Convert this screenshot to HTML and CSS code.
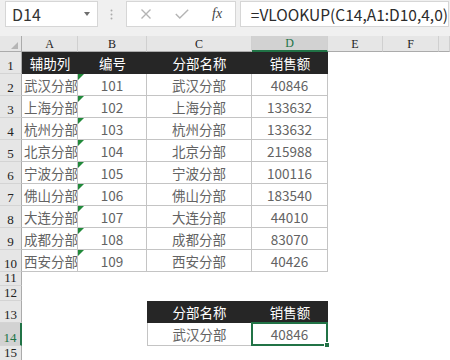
FILE: index.html
```html
<!DOCTYPE html>
<html>
  <head>
    <title>VLOOKUP</title>
    <link rel="stylesheet" href="styles.css">
  </head>

  <body>
    <div class="toolbar">
      <div class="namebox">
        <span>D14</span>
        <span class="caret"></span>
      </div>
      <div class="grip">
        <svg width="3" height="11" viewBox="0 0 3 11">
          <circle cx="1.5" cy="1.5" r="1" />
          <circle cx="1.5" cy="5.5" r="1" />
          <circle cx="1.5" cy="9.5" r="1" />
        </svg>
      </div>
      <div class="fbuttons">
        <span class="fbtn">
          <svg width="10" height="10" viewBox="0 0 10 10">
            <path d="M0.5 0.5 L9.5 9.5 M9.5 0.5 L0.5 9.5" />
          </svg>
        </span>
        <span class="fbtn">
          <svg width="14" height="10" viewBox="0 0 14 10">
            <path d="M0.8 5 L4.8 9 L13.2 0.8" />
          </svg>
        </span>
        <span class="fbtn fx">fx</span>
      </div>
      <div class="formula">=VLOOKUP(C14,A1:D10,4,0)</div>
    </div>

    <div class="sheet">
      <!-- column headers -->
      <div class="corner">
        <svg width="7" height="7" viewBox="0 0 7 7"><polygon points="7,0 7,7 0,7" /></svg>
      </div>
      <div class="colhead">A</div>
      <div class="colhead">B</div>
      <div class="colhead">C</div>
      <div class="colhead active">D</div>
      <div class="colhead">E</div>
      <div class="colhead">F</div>
      <div class="colhead"></div>

      <!-- row 1 -->
      <div class="rowhead">1</div>
      <div class="th">辅助列</div>
      <div class="th">编号</div>
      <div class="th">分部名称</div>
      <div class="th">销售额</div>
      <div class="blank span3"></div>

      <div class="rowhead">2</div>
      <div class="td left">武汉分部</div>
      <div class="td flag">101</div>
      <div class="td">武汉分部</div>
      <div class="td">40846</div>
      <div class="blank span3"></div>

      <div class="rowhead">3</div>
      <div class="td left">上海分部</div>
      <div class="td flag">102</div>
      <div class="td">上海分部</div>
      <div class="td">133632</div>
      <div class="blank span3"></div>

      <div class="rowhead">4</div>
      <div class="td left">杭州分部</div>
      <div class="td flag">103</div>
      <div class="td">杭州分部</div>
      <div class="td">133632</div>
      <div class="blank span3"></div>

      <div class="rowhead">5</div>
      <div class="td left">北京分部</div>
      <div class="td flag">104</div>
      <div class="td">北京分部</div>
      <div class="td">215988</div>
      <div class="blank span3"></div>

      <div class="rowhead">6</div>
      <div class="td left">宁波分部</div>
      <div class="td flag">105</div>
      <div class="td">宁波分部</div>
      <div class="td">100116</div>
      <div class="blank span3"></div>

      <div class="rowhead">7</div>
      <div class="td left">佛山分部</div>
      <div class="td flag">106</div>
      <div class="td">佛山分部</div>
      <div class="td">183540</div>
      <div class="blank span3"></div>

      <div class="rowhead">8</div>
      <div class="td left">大连分部</div>
      <div class="td flag">107</div>
      <div class="td">大连分部</div>
      <div class="td">44010</div>
      <div class="blank span3"></div>

      <div class="rowhead">9</div>
      <div class="td left">成都分部</div>
      <div class="td flag">108</div>
      <div class="td">成都分部</div>
      <div class="td">83070</div>
      <div class="blank span3"></div>

      <div class="rowhead">10</div>
      <div class="td left">西安分部</div>
      <div class="td flag">109</div>
      <div class="td">西安分部</div>
      <div class="td">40426</div>
      <div class="blank span3"></div>

      <div class="rowhead">11</div>
      <div class="blank span7"></div>

      <div class="rowhead">12</div>
      <div class="blank span7"></div>

      <!-- lookup table -->
      <div class="rowhead">13</div>
      <div class="blank span2"></div>
      <div class="th">分部名称</div>
      <div class="th">销售额</div>
      <div class="blank span3"></div>

      <div class="rowhead active">14</div>
      <div class="blank span2"></div>
      <div class="td boxed">武汉分部</div>
      <div class="td sel">40846</div>
      <div class="blank span3"></div>

      <div class="rowhead">15</div>
      <div class="blank span7"></div>
    </div>
  </body>
</html>
```

FILE: styles.css
```css
body {
  margin: 0;
  background-color: #fff;
  font-family: "Noto Sans CJK SC", sans-serif;
}

/* formula bar */
.toolbar {
  display: flex;
  align-items: flex-start;
  height: 36px;
  padding-top: 1px;
  box-sizing: border-box;
  background-color: #f0f0f0;
}

.namebox {
  width: 101px;
  height: 26px;
  margin-left: 5px;
  padding: 0 7px 0 6px;
  box-sizing: border-box;
  display: flex;
  align-items: center;
  justify-content: space-between;
  background-color: #fff;
  border: 1px solid #d6d6d6;
  font-size: 16px;
  color: #333;
}

.caret {
  width: 0;
  height: 0;
  border-left: 3px solid transparent;
  border-right: 3px solid transparent;
  border-top: 4px solid #6e6e6e;
}

.grip {
  width: 31px;
  height: 26px;
  display: flex;
  align-items: center;
  justify-content: center;
}

.grip svg {
  fill: #ababab;
}

.fbuttons {
  width: 110px;
  height: 26px;
  padding-left: 2px;
  box-sizing: border-box;
  display: flex;
  align-items: center;
  background-color: #fff;
  border: 1px solid #d6d6d6;
}

.fbtn {
  width: 36px;
  display: flex;
  justify-content: center;
}

.fbtn svg {
  fill: none;
  stroke: #b4b4b4;
  stroke-width: 1.4;
}

.fx {
  font-family: "Liberation Serif", serif;
  font-style: italic;
  font-size: 14px;
  color: #444;
}

.formula {
  flex: 1;
  height: 26px;
  margin: 0 1px 0 4px;
  padding-left: 10px;
  box-sizing: border-box;
  background-color: #fff;
  border: 1px solid #d6d6d6;
  font-size: 15.5px;
  line-height: 24px;
  color: #2b2b2b;
  white-space: nowrap;
}

/* sheet grid */
.sheet {
  display: grid;
  grid-template-columns: 22px 56px 69px 105px 76px 55px 56px 1fr;
  grid-template-rows: 16px repeat(10, 22px) 14px 15px 22px 23px 1fr;
  height: 324px;
  font-size: 13.5px;
}

.sheet > div {
  box-sizing: border-box;
}

.corner {
  display: flex;
  justify-content: flex-end;
  align-items: flex-end;
  padding: 0 3px 2px 0;
  background-color: #e6e6e6;
  border-right: 1px solid #ababab;
  border-bottom: 1px solid #ababab;
}

.corner svg {
  fill: #b5b5b5;
}

.colhead {
  display: flex;
  justify-content: center;
  align-items: flex-end;
  background-color: #e6e6e6;
  border-right: 1px solid #d0d0d0;
  border-bottom: 1px solid #ababab;
  font-family: "Liberation Serif", serif;
  font-size: 12px;
  line-height: 14px;
  color: #222;
}

.colhead.active {
  background-color: #d2d2d2;
  border-bottom: 2px solid #217346;
  color: #217346;
}

.rowhead {
  display: flex;
  justify-content: center;
  align-items: flex-end;
  background-color: #e6e6e6;
  border-right: 1px solid #ababab;
  border-bottom: 1px solid #d4d4d4;
  font-family: "Liberation Serif", serif;
  font-size: 13px;
  line-height: 14px;
  color: #222;
}

.rowhead.active {
  background-color: #d2d2d2;
  border-right: 2px solid #217346;
  color: #217346;
}

.span2 {
  grid-column: span 2;
}

.span3 {
  grid-column: span 3;
}

.span7 {
  grid-column: span 7;
}

/* table cells */
.th,
.td {
  display: flex;
  align-items: center;
  justify-content: center;
  white-space: nowrap;
  overflow: hidden;
}

.th {
  background-color: #262626;
  color: #fff;
}

.td {
  color: #636363;
  border-right: 1px solid #c4c4c4;
  border-bottom: 1px solid #c4c4c4;
}

.td.left {
  justify-content: flex-start;
  padding-left: 2px;
}

.td.flag {
  position: relative;
}

.td.flag::before {
  content: "";
  position: absolute;
  left: 0;
  top: 0;
  border-top: 6px solid #21893a;
  border-right: 6px solid transparent;
}

.td.boxed {
  border-left: 1px solid #c4c4c4;
}

.td.sel {
  position: relative;
  overflow: visible;
}

.td.sel::after {
  content: "";
  position: absolute;
  top: -1px;
  left: -1px;
  right: -1px;
  bottom: -1px;
  border: 2px solid #217346;
}

.td.sel::before {
  content: "";
  position: absolute;
  right: -3px;
  bottom: -3px;
  width: 4px;
  height: 4px;
  background-color: #217346;
  border: 1px solid #fff;
  z-index: 1;
}
```
